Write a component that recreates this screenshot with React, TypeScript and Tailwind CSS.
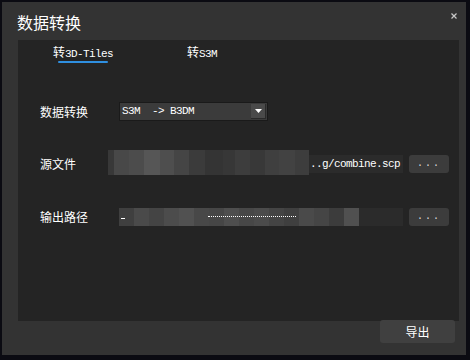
import React from "react";

const cjk = { fontFamily: '"Noto Sans CJK SC", "Noto Sans", sans-serif' };
const mono = { fontFamily: '"Liberation Mono", "Noto Sans CJK SC", monospace' };

// mosaic blocks hiding the real path: [width, colour]
const srcBlur: [number, string][] = [
  [6, "#383838"],
  [15, "#484848"],
  [15, "#4c4c4c"],
  [16, "#565656"],
  [14, "#4e4e4e"],
  [15, "#454545"],
  [16, "#3b3b3b"],
  [18, "#343434"],
  [12, "#373737"],
  [15, "#3d3d3d"],
  [15, "#383838"],
  [14, "#3f3f3f"],
  [16, "#424242"],
  [14, "#3d3d3d"],
];

const outBlur: [number, string][] = [
  [15, "#3f3f3f"],
  [15, "#4a4a4a"],
  [15, "#444444"],
  [15, "#4c4c4c"],
  [15, "#515151"],
  [15, "#484848"],
  [15, "#464646"],
  [15, "#4e4e4e"],
  [15, "#474747"],
  [15, "#4b4b4b"],
  [15, "#444444"],
  [15, "#3f3f3f"],
  [15, "#4a4a4a"],
  [15, "#454545"],
  [15, "#3c3c3c"],
  [15, "#505050"],
];

const DotsButton = () => (
  <button
    className="ml-[6px] w-[40px] h-[18px] rounded-[3px] bg-[#3c3c3c] text-[#dddddd] text-[10px] leading-[18px] tracking-[2px]"
    style={mono}
  >
    ...
  </button>
);

export default function App() {
  return (
    <div className="w-[470px] h-[360px] bg-[#0b0b12] pt-[2px] pl-[2px]">
      <div className="relative w-[464px] h-[353px] bg-[#333333] flex flex-col">
        <div className="h-[38px] pl-[15px] pt-[9px]">
          <span className="text-white text-[16px] leading-[22px]" style={cjk}>
            数据转换
          </span>
        </div>
        <svg
          className="absolute top-[11px] right-[9px]"
          width="6"
          height="6"
          viewBox="0 0 6 6"
        >
          <path d="M0.5 0.5L5.5 5.5M5.5 0.5L0.5 5.5" stroke="#c8c8c8" strokeWidth="1.2" />
        </svg>

        <div className="ml-[16px] mr-[7px] h-[281px] bg-[#242424] flex flex-col">
          <div className="flex pl-[35px] pt-[3px] text-white">
            <div className="flex flex-col">
              <span className="h-[16px] leading-[16px] whitespace-nowrap">
                <span className="text-[12px]" style={cjk}>转</span>
                <span className="text-[11px] tracking-[-0.6px]" style={mono}>3D-Tiles</span>
              </span>
              <div className="ml-[5px] mt-[2px] h-[2px] w-[50px] bg-[#2f8fe0] rounded-[1px]" />
            </div>
            <span className="ml-[74px] h-[16px] leading-[16px] whitespace-nowrap">
              <span className="text-[12px]" style={cjk}>转</span>
              <span className="text-[11px] tracking-[-0.6px]" style={mono}>S3M</span>
            </span>
          </div>

          <div className="flex flex-col pl-[22px] text-white">
            <div className="mt-[39px] flex items-center h-[19px]">
              <span className="w-[79px] text-[12px]" style={cjk}>数据转换</span>
              <div className="w-[149px] h-[19px] border border-[#1a1a1a] bg-[#3b3b3b] flex items-center">
                <span className="pl-[2px] flex-1 text-[11px] tracking-[-0.6px] whitespace-pre" style={mono}>
                  S3M  -&gt; B3DM
                </span>
                <div className="mr-[1px] w-[15px] h-[15px] bg-[#4a4a4a] border-b border-r border-[#2a2a2a] flex items-center justify-center">
                  <svg width="7" height="4" viewBox="0 0 7 4">
                    <path d="M0 0H7L3.5 4Z" fill="#ffffff" />
                  </svg>
                </div>
              </div>
            </div>

            <div className="mt-[34px] flex items-center h-[18px]">
              <span className="w-[79px] text-[12px]" style={cjk}>源文件</span>
              <div className="relative w-[284px] h-[18px] bg-[#2b2b2b] flex items-center justify-end pr-[3px]">
                <div className="absolute left-[-11px] top-[-5px] h-[25px] flex">
                  {srcBlur.map(([w, c], i) => (
                    <div key={i} className="h-full" style={{ width: w, background: c }} />
                  ))}
                </div>
                <span className="text-[11px] tracking-[-0.6px] text-white whitespace-nowrap" style={mono}>
                  ..g/combine.scp
                </span>
              </div>
              <DotsButton />
            </div>

            <div className="mt-[35px] flex items-center h-[18px]">
              <span className="w-[79px] text-[12px]" style={cjk}>输出路径</span>
              <div className="relative w-[284px] h-[18px] bg-[#2b2b2b] overflow-hidden">
                <div className="absolute left-0 top-0 h-full flex">
                  {outBlur.map(([w, c], i) => (
                    <div key={i} className="h-full" style={{ width: w, background: c }} />
                  ))}
                </div>
                <div className="absolute left-[89px] top-[8px] w-[88px] h-px border-t border-dotted border-white" />
                <div className="absolute left-[2px] top-[10px] w-[4px] h-px bg-white" />
              </div>
              <DotsButton />
            </div>
          </div>
        </div>

        <div className="flex justify-end pr-[11px]">
          <button
            className="-mt-px w-[75px] h-[23px] rounded-[3px] bg-[#404040] text-white text-[12px]"
            style={cjk}
          >
            导出
          </button>
        </div>
      </div>
    </div>
  );
}
